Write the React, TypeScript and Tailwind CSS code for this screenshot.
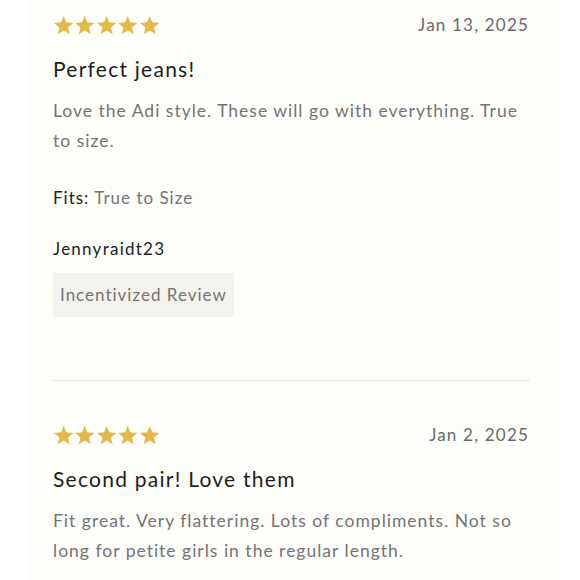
import React from "react";

const Star = () => (
  <svg viewBox="0 0 24 24" className="w-[21.4px] h-[21px]" fill="#e3b94c">
    <polygon points="12,1 15,8.4 23,9 16.9,14.2 18.8,22 12,17.8 5.2,22 7.1,14.2 1,9 9,8.4" />
  </svg>
);

interface Review {
  date: string;
  title: string;
  body: string;
  fits?: string;
  author?: string;
  incentivized?: boolean;
}

const reviews: Review[] = [
  {
    date: "Jan 13, 2025",
    title: "Perfect jeans!",
    body: "Love the Adi style. These will go with everything. True to size.",
    fits: "True to Size",
    author: "Jennyraidt23",
    incentivized: true,
  },
  {
    date: "Jan 2, 2025",
    title: "Second pair! Love them",
    body: "Fit great. Very flattering. Lots of compliments. Not so long for petite girls in the regular length.",
  },
];

const ReviewItem = ({ review }: { review: Review }) => (
  <div>
    <div className="flex items-center justify-between h-[18px]">
      <div className="flex">
        {[0, 1, 2, 3, 4].map((i) => (
          <Star key={i} />
        ))}
      </div>
      <span className="text-[17px] text-[#6a6a6a] tracking-[1.2px]">{review.date}</span>
    </div>
    <h3 className="mt-[21px] text-[21px] leading-[28px] text-[#1e1e1e] tracking-[1.25px]">
      {review.title}
    </h3>
    <p className="mt-[13px] text-[17.5px] leading-[30px] text-[#747474] tracking-[1px]">
      {review.body}
    </p>
    {review.fits && (
      <div className="mt-[27px] text-[17px] leading-[30px] tracking-[1px]">
        <span className="text-[#222]">Fits:</span>{" "}
        <span className="text-[#747474]">{review.fits}</span>
      </div>
    )}
    {review.author && (
      <div className="mt-[24px] text-[17px] leading-[24px] text-[#1e1e1e] tracking-[1.25px]">
        {review.author}
      </div>
    )}
    {review.incentivized && (
      <div className="mt-[12px] inline-flex items-center h-[44px] px-[7px] bg-[#f4f3f0] text-[17px] text-[#747474] tracking-[1px]">
        Incentivized Review
      </div>
    )}
  </div>
);

export default function App() {
  return (
    <div className="w-[580px] h-[580px] bg-white overflow-hidden" style={{ fontFamily: "Lato, 'Open Sans', sans-serif" }}>
      <div className="ml-[28px] w-[526px] h-full bg-[#fdfdf9] px-[25px] pt-[16px]">
        <ReviewItem review={reviews[0]} />
        <div className="mt-[63px] border-t border-dotted border-[#d8d8d4]" />
        <div className="mt-[45px]">
          <ReviewItem review={reviews[1]} />
        </div>
      </div>
    </div>
  );
}
